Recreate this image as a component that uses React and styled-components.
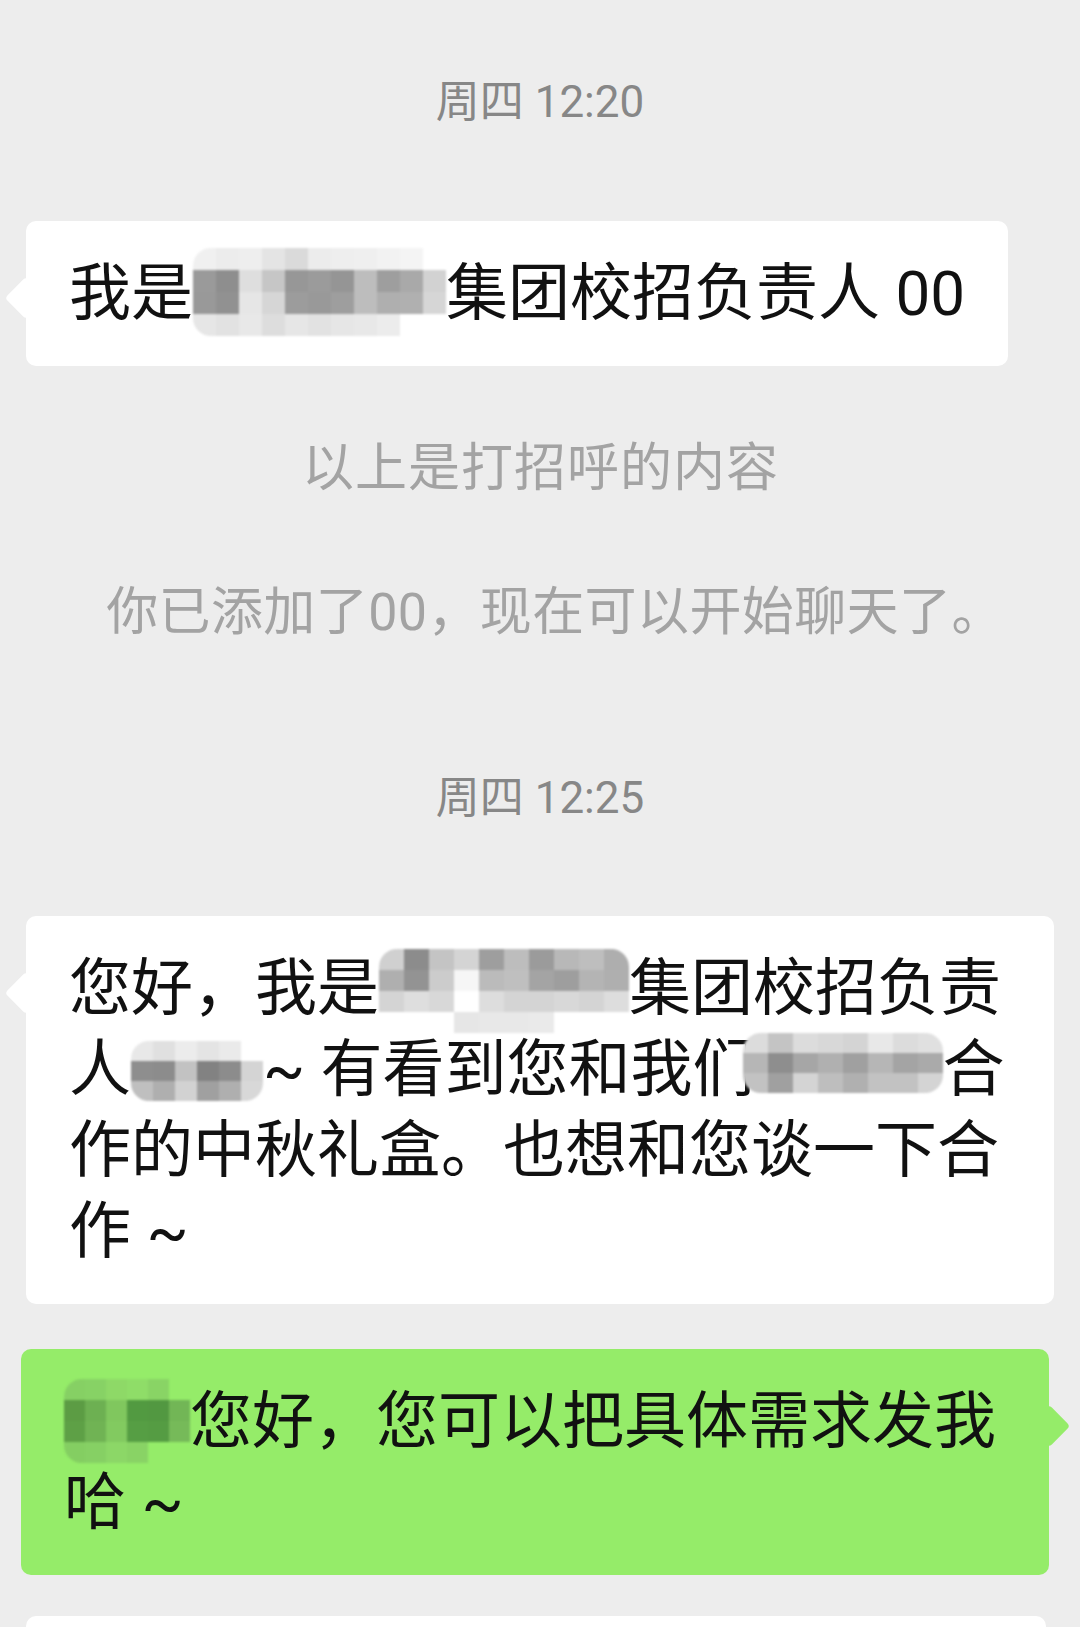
import React from "react";
import styled, { createGlobalStyle } from "styled-components";

const Global = createGlobalStyle`
  html, body { margin: 0; padding: 0; background: #ededed; }
  body { font-family: Roboto, "Noto Sans CJK SC", sans-serif; }
`;

const Page = styled.div`
  width: 1080px;
  height: 1627px;
  overflow: hidden;
  display: flex;
  flex-direction: column;
  background: #ededed;
`;

const TimeStamp = styled.div`
  margin-top: ${(p) => p.$mt}px;
  text-align: center;
  font-size: 44px;
  line-height: 60px;
  color: #878787;
`;

const SystemNote = styled.div`
  margin-top: ${(p) => p.$mt}px;
  text-align: center;
  font-size: ${(p) => p.$size || 51}px;
  line-height: 60px;
  color: #a3a3a3;
  letter-spacing: ${(p) => p.$spacing || 0}px;
  padding-left: ${(p) => p.$shift || 0}px;
`;

const Row = styled.div`
  margin-top: ${(p) => p.$mt}px;
  display: flex;
  justify-content: ${(p) => (p.$side === "right" ? "flex-end" : "flex-start")};
  padding: ${(p) => (p.$side === "right" ? "0 31px 0 0" : "0 0 0 26px")};
`;

const Bubble = styled.div`
  position: relative;
  box-sizing: border-box;
  max-width: 1028px;
  min-height: ${(p) => p.$minH || 0}px;
  width: ${(p) => (p.$w ? `${p.$w}px` : "auto")};
  padding: 32px 43px;
  border-radius: 10px;
  background: ${(p) => (p.$tone === "green" ? "#95ec69" : "#ffffff")};
  color: #111111;
  font-size: 62px;
  line-height: 81px;
  word-break: break-all;

  &::before {
    content: "";
    display: ${(p) => (p.$tail ? "block" : "none")};
    position: absolute;
    top: 62px;
    ${(p) => (p.$side === "right" ? "right: -15px;" : "left: -15px;")}
    width: 30px;
    height: 30px;
    border-radius: 4px;
    background: inherit;
    transform: rotate(45deg);
  }
`;

const MosaicBox = styled.span`
  display: inline-grid;
  grid-template-columns: repeat(${(p) => p.$cols}, ${(p) => p.$cw}px);
  grid-auto-rows: ${(p) => p.$rh}px;
  vertical-align: middle;
  margin: -10px 0 -10px ${(p) => p.$ml || 0}px;
  transform: translateY(${(p) => p.$dy || -7}px);
  border-radius: 18px;
  overflow: hidden;
  filter: blur(1.2px);
`;

const Cell = styled.span`
  display: block;
  background: ${(p) => (p.$c ? `#${p.$c}` : "transparent")};
`;

function Mosaic({ rows, cw, rh, ml, dy }) {
  return (
    <MosaicBox $cols={rows[0].length} $cw={cw} $rh={rh} $ml={ml} $dy={dy}>
      {rows.flatMap((r, i) => r.map((c, j) => <Cell key={`${i}-${j}`} $c={c} />))}
    </MosaicBox>
  );
}

const m1 = [
  ["f0f0f0", "ececec", "eeeeee", "e4e4e4", "dadada", "ececec", "eeeeee", "efefef", "f2f2f2", "f4f4f4", ""],
  ["9a9a9a", "8e8e8e", "dedede", "c6c6c6", "979797", "9b9b9b", "959595", "bdbdbd", "9e9e9e", "a9a9a9", "d2d2d2"],
  ["999999", "919191", "e6e6e6", "d6d6d6", "9c9c9c", "999999", "9e9e9e", "bdbdbd", "afafaf", "b0b0b0", "d6d6d6"],
  ["e6e6e6", "e2e2e2", "e8e8e8", "dddddd", "e6e6e6", "e2e2e2", "e6e6e6", "e8e8e8", "ececec", "", ""],
];

const m2 = [
  ["d0d0d0", "8c8c8c", "c4c4c4", "d4d4d4", "9e9e9e", "bdbdbd", "9b9b9b", "b8b8b8", "bebebe", "aeaeae"],
  ["afafaf", "939393", "cccccc", "f6f6f6", "bbbbbb", "bfbfbf", "a4a4a4", "9e9e9e", "b4b4b4", "afafaf"],
  ["d4d4d4", "dedede", "d8d8d8", "ffffff", "dddddd", "d4d4d4", "d4d4d4", "d8d8d8", "d4d4d4", "dddddd"],
  ["", "", "", "e6e6e6", "e8e8e8", "e8e8e8", "eaeaea", "", "", ""],
];

const m3 = [
  ["e8e8e8", "e0e0e0", "ececec", "e4e4e4", "eaeaea", ""],
  ["8e8e8e", "8c8c8c", "c2c2c2", "828282", "8c8c8c", "d4d4d4"],
  ["bfbfbf", "afafaf", "d2d2d2", "a0a0a0", "afafaf", "d8d8d8"],
];

const m4 = [
  ["dcdcdc", "c4c4c4", "dcdcdc", "d8d8d8", "d4d4d4", "e8e8e8", "dcdcdc", "e0e0e0"],
  ["b6b6b6", "8e8e8e", "a6a6a6", "b0b0b0", "a0a0a0", "b6b6b6", "a4a4a4", "aaaaaa"],
  ["c2c2c2", "a0a0a0", "d4d4d4", "bebebe", "b0b0b0", "c2c2c2", "c2c2c2", "d4d4d4"],
];

const mg = [
  ["86d064", "87d265", "8ed967", "8fdd68", "89d465", ""],
  ["5c9c44", "6db052", "80c75e", "529a41", "529841", "72b656"],
  ["5ea046", "70b354", "82ca60", "569e44", "559c43", "76ba59"],
  ["84ce62", "86d064", "8cd767", "89d365", "", ""],
];

export default function App() {
  return (
    <>
      <Global />
      <Page>
        <TimeStamp $mt={72}>周四 12:20</TimeStamp>

        <Row $side="left" $mt={89}>
          <Bubble $tone="white" $side="left" $tail>
            我是
            <Mosaic rows={m1} cw={23} rh={22} />
            集团校招负责人 00
          </Bubble>
        </Row>

        <SystemNote $mt={73} $size={52} $spacing={1} $shift={1}>以上是打招呼的内容</SystemNote>
        <SystemNote $mt={84} $size={52} $spacing={0.4} $shift={30}>你已添加了00，现在可以开始聊天了。</SystemNote>

        <TimeStamp $mt={125}>周四 12:25</TimeStamp>

        <Row $side="left" $mt={88}>
          <Bubble $tone="white" $side="left" $tail>
            您好，我是
            <Mosaic rows={m2} cw={25} rh={21} dy={-3} />
            集团校招负责人
            <Mosaic rows={m3} cw={22} rh={20} dy={-4} />
            ~ 有看到您和我们
            <Mosaic rows={m4} cw={25} rh={20} ml={-12} dy={-12} />
            合作的中秋礼盒。也想和您谈一下合作 ~
          </Bubble>
        </Row>

        <Row $side="right" $mt={45}>
          <Bubble $tone="green" $side="right" $tail>
            <Mosaic rows={mg} cw={21} rh={21} dy={-6} />
            您好，您可以把具体需求发我哈 ~
          </Bubble>
        </Row>

        <Row $side="left" $mt={41}>
          <Bubble $tone="white" $side="left" $w={1020} $minH={160} />
        </Row>
      </Page>
    </>
  );
}
